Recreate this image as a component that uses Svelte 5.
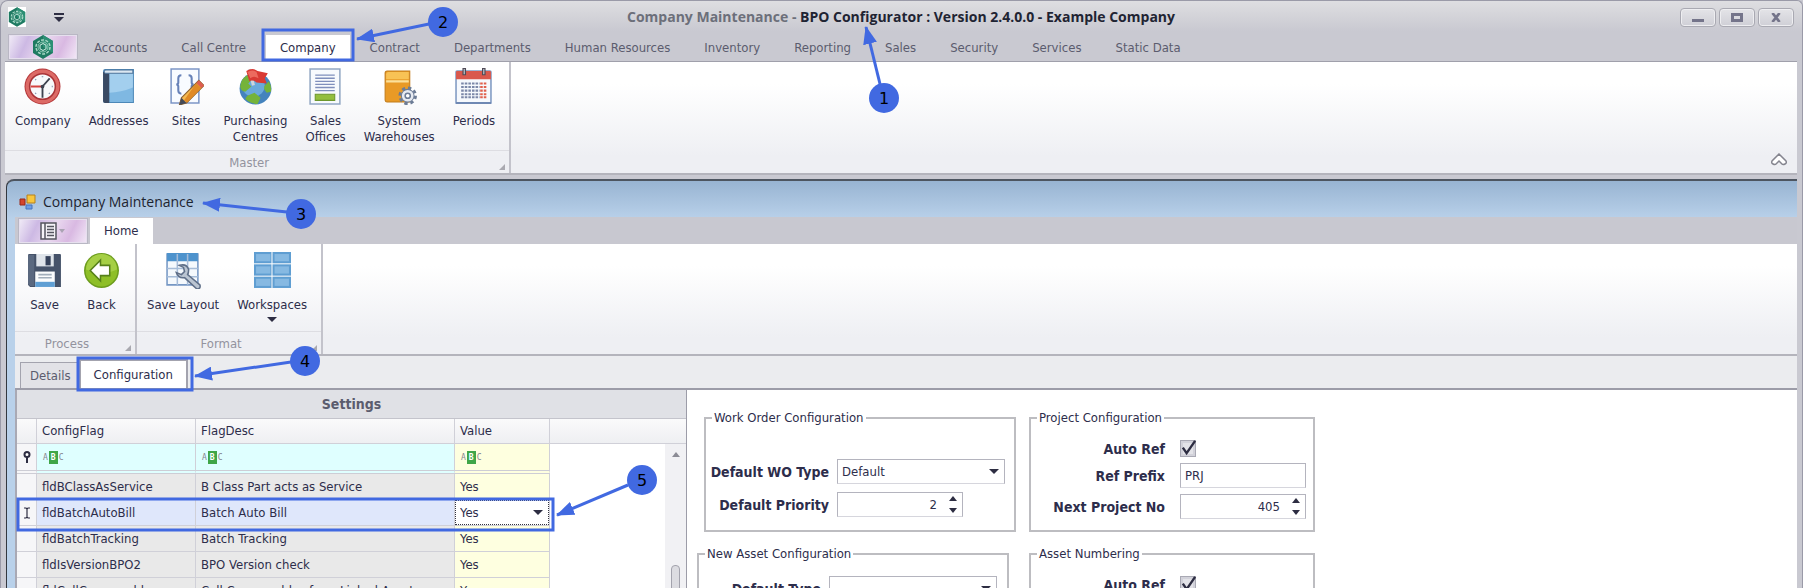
<script lang="ts">
    type Action = { label: string; icon: string; menu?: boolean };
    type Marker = { n: number; x: number; y: number; from: [number, number]; to: [number, number] };

    const tabs = [
        "Accounts",
        "Call Centre",
        "Company",
        "Contract",
        "Departments",
        "Human Resources",
        "Inventory",
        "Reporting",
        "Sales",
        "Security",
        "Services",
        "Static Data",
    ];

    const masterActions: Action[] = [
        { label: "Company", icon: "clock" },
        { label: "Addresses", icon: "book" },
        { label: "Sites", icon: "script" },
        { label: "Purchasing\nCentres", icon: "globe" },
        { label: "Sales\nOffices", icon: "page" },
        { label: "System\nWarehouses", icon: "box" },
        { label: "Periods", icon: "calendar" },
    ];

    const processActions: Action[] = [
        { label: "Save", icon: "floppy" },
        { label: "Back", icon: "back" },
    ];

    const formatActions: Action[] = [
        { label: "Save Layout", icon: "layout" },
        { label: "Workspaces", icon: "workspaces", menu: true },
    ];

    const settings = [
        { flag: "fldBClassAsService", desc: "B Class Part acts as Service", value: "Yes" },
        { flag: "fldBatchAutoBill", desc: "Batch Auto Bill", value: "Yes" },
        { flag: "fldBatchTracking", desc: "Batch Tracking", value: "Yes" },
        { flag: "fldIsVersionBPO2", desc: "BPO Version check", value: "Yes" },
        { flag: "fldCallConsumables", desc: "Call Consumables from Linked Asset", value: "Yes" },
    ];

    const markers: Marker[] = [
        { n: 1, x: 884, y: 98, from: [880, 84], to: [866, 27] },
        { n: 2, x: 443, y: 22, from: [429, 24], to: [357, 39] },
        { n: 3, x: 301, y: 214, from: [287, 212], to: [203, 203] },
        { n: 4, x: 305, y: 361, from: [291, 362], to: [195, 376] },
        { n: 5, x: 642, y: 480, from: [628, 485], to: [557, 515] },
    ];

    let activeTab = $state("Company");
    let selectedFlag = $state("fldBatchAutoBill");
    let workOrderType = $state("Default");
    let priority = $state(2);
    let projectAutoRef = $state(true);
    let refPrefix = $state("PRJ");
    let nextProject = $state(405);
    let assetAutoRef = $state(true);
</script>

{#snippet logo()}
    <svg class="logo" viewBox="1 0 22 24" aria-hidden="true">
        <path d="M12 0 22 6v12l-10 6L2 18V6z" fill="#1f7a62" />
        <path d="M12 0 22 6v12l-10-6z" fill="#2c8f74" />
        <circle cx="12" cy="12" r="7" fill="none" stroke="#a9d8c6" stroke-width="1.5" stroke-dasharray="3 1.4" />
        <circle cx="12" cy="12" r="5" fill="none" stroke="#8cc7b2" />
        <path d="M12 8.500l3 1.700v3.600l-3 1.700-3-1.700v-3.600z" fill="none" stroke="#d2eee4" />
    </svg>
{/snippet}

{#snippet icon(name: string)}
    <svg class="icon" viewBox="0 0 36 36" aria-hidden="true">
        {#if name === "clock"}
            <circle cx="18" cy="18" r="17.500" fill="#b5393b" />
            <circle cx="18" cy="18" r="16.500" fill="#dc6a66" />
            <circle cx="18" cy="18" r="12.500" fill="#f7f9fb" stroke="#a93438" stroke-width="1.5" />
            <path d="M18 18 25 10M18 18v11" stroke="#3d4350" stroke-width="1.8" fill="none" />
            <path d="M18 18H6.500" stroke="#d4423f" stroke-width="1.8" />
            <circle cx="18" cy="18" r="1.800" fill="#3d4350" />
            <path d="M18 8v1M28 18h-1M11 11l.7.7M11 25l.7-.7M25 25l-.7-.7" stroke="#7b8fa8" stroke-width="1.5" />
        {:else if name === "book"}
            <path d="M3 3q0-2 2-2h28v33H5q-2 0-2-2z" fill="#4c88b8" />
            <path d="M9 5h23v28H9z" fill="#7fb8e2" />
            <path d="M9 5h23v14Q20 24 9 24z" fill="#a3cfee" />
            <path d="M3 4h6v30H5q-2 0-2-2z" fill="#3a4a63" />
            <path d="M5 2h27v3H5q-2-1 0-3z" fill="#dce8f2" stroke="#4f749a" />
        {:else if name === "script"}
            <path d="M4 1h27v33H4z" fill="#f8fbff" stroke="#7d97c6" stroke-width="1.5" />
            <path d="M14 7q-3 0-3 3v4q0 2-2 2 2 0 2 2v4q0 3 3 3M21 7q3 0 3 3v4q0 2 2 2-2 0-2 2v4q0 3-3 3" fill="none" stroke="#6782b8" stroke-width="2" />
            <path d="M31 12l5 5-17 17-7 2 2-7z" fill="#f5b950" stroke="#8c6230" />
            <path d="M28.500 14.500l5 5-14 14-3-2z" fill="#e08a25" />
            <path d="M31 12l5 5-2.500 2.500-5-5z" fill="#dd5d50" />
            <path d="M14 29l5 5-7 2z" fill="#444a58" />
        {:else if name === "globe"}
            <circle cx="18" cy="20" r="15.500" fill="#4483bd" />
            <circle cx="16" cy="17" r="11" fill="#6aa9db" />
            <path d="M3 18q1-9 9-12l4 4-5 5 3 3-6 5q-4 0-5-5zM10 27l7-3 6 5-3 6q-7 0-12-5zM27 17l4-4q3 5 2 10l-4 1q-4-3-2-7z" fill="#74b33a" />
            <path d="M12 1l4 16" stroke="#cfd5dc" stroke-width="3" />
            <path d="M9 3q6-4 11 0l10 2-3 5 2 5-10-1q-4-3-7-1z" fill="#d93a34" />
            <path d="M10 4q5-3 9 0l2 6q-5-3-8 0z" fill="#ec6a5e" />
        {:else if name === "page"}
            <path d="M3 1h29v34H3z" fill="#f7fafd" stroke="#93a8c4" stroke-width="1.5" />
            <path d="M8 7h19M8 10h19M8 13h19M8 16h19M8 19h19M8 22h19" stroke="#7f8fbc" stroke-width="1.300" />
            <path d="M8 25.500h19v6H8z" fill="#93be3e" stroke="#6c972c" />
        {:else if name === "box"}
            <path d="M4 5q0-2 2-2h22v30H6q-2 0-2-2z" fill="#e99a26" stroke="#c27c1b" />
            <path d="M5 6q0-2 2-2h20v7H5z" fill="#f8c255" />
            <path d="M5 12h22v2H5z" fill="#fbe09a" />
            <circle cx="26" cy="27" r="7.500" fill="none" stroke="#6c7c96" stroke-width="3" stroke-dasharray="3.200 2.690" />
            <circle cx="26" cy="27" r="6.200" fill="#e6eaf1" stroke="#6c7c96" />
            <circle cx="26" cy="27" r="2.500" fill="#fff" stroke="#6c7c96" stroke-width="1.500" />
        {:else if name === "calendar"}
            <path d="M1 4q0-1 1-1h32q1 0 1 1v30H1z" fill="#f6f9fd" stroke="#7f99c2" stroke-width="1.500" />
            <path d="M1 4q0-1 1-1h32q1 0 1 1v7H1z" fill="#d9584d" />
            <path d="M9 0v7M28 0v7" stroke="#4f4a55" stroke-width="3.500" />
            <path d="M9 1v5M28 1v5" stroke="#bcc2cc" stroke-width="1.200" />
            <path d="M6 15h18M6 18.500h18M6 22h18M6 25.500h18M6 28.500h18" stroke="#7b87a8" stroke-width="2" stroke-dasharray="2.500 1" />
            <path d="M24.500 15H31M24.500 18.500H31M24.500 22H31M24.500 25.500H31M24.500 28.500H31" stroke="#e0604d" stroke-width="2" stroke-dasharray="2.500 1" />
            <path d="M1 33h34v2H1z" fill="#6f88b3" />
        {:else if name === "floppy"}
            <path d="M2 3q0-1 1-1h30q1 0 1 1v31H4l-2-2z" fill="#46536a" />
            <path d="M2 3h6v30H4l-2-2z" fill="#5a687f" />
            <path d="M10 2h17v12H10z" fill="#dfe4ea" />
            <path d="M19 4h5v9h-5z" fill="#35415a" />
            <path d="M9 19h19v15H9z" fill="#fbfcfd" />
            <path d="M9 29h19v5H9z" fill="#5f9fd4" />
            <path d="M12 22h13M12 25h13" stroke="#a2aebb" stroke-width="1.500" />
        {:else if name === "back"}
            <circle cx="18" cy="18" r="17" fill="#6c9c1d" />
            <circle cx="18" cy="18" r="15.500" fill="#8ebf27" />
            <path d="M3 17a15 15 0 0 1 30 0q-14 7-30 0z" fill="#a5cf45" />
            <path d="M7 18 17 8v5h9v10h-9v5z" fill="#fff" stroke="#56801a" stroke-width="1.500" />
        {:else if name === "layout"}
            <path d="M2 2h30v30H2z" fill="#f5f9fd" stroke="#7597c4" stroke-width="1.500" />
            <path d="M2 1h30v8H2z" fill="#4e93cd" />
            <path d="M2 16h30M2 24h30M12 2v30M22 2v30" stroke="#a6bcd8" stroke-width="1.500" />
            <path d="M14 13q7-2 9 4 0 3-1 5l12 10q1 4-3 4L19 25q-6 1-8-5l5 2 3-3-1-4z" fill="#bbc5d2" stroke="#5f6f88" stroke-width="1.500" />
        {:else if name === "workspaces"}
            {#each [0, 12, 24] as y}
                <rect x="0" {y} width="17" height="11" fill="#5f9ed2" />
                <rect x="18" {y} width="18" height="11" fill="#5f9ed2" />
                <rect x="2" y={y + 2} width="14" height="7" fill="#86b9e2" />
                <rect x="20" y={y + 2} width="14" height="7" fill="#86b9e2" />
            {/each}
        {/if}
    </svg>
{/snippet}

{#snippet group(title: string, actions: Action[])}
    <section class="group" aria-label={title}>
        <div class="actions">
            {#each actions as action}
                <button type="button" class="action">
                    {@render icon(action.icon)}
                    <span>{action.label}</span>
                    {#if action.menu}<i class="caret"></i>{/if}
                </button>
            {/each}
        </div>
        <div class="group-title">{title}<i class="launcher"></i></div>
    </section>
{/snippet}

{#snippet tick()}
    <svg viewBox="0 0 18 18" aria-hidden="true">
        <path d="M3 8l4 6L16 1" fill="none" stroke="#2d2d42" stroke-width="2.500" />
    </svg>
{/snippet}

{#snippet spinner()}
    <span class="spinner">
        <button type="button" aria-label="Increase"><i class="caret up"></i></button>
        <button type="button" aria-label="Decrease"><i class="caret"></i></button>
    </span>
{/snippet}

{#snippet abc()}
    <span class="abc">A<b>B</b>C</span>
{/snippet}

<div class="shell">
    <header class="title-bar">
        <div class="quick-access">
            {@render logo()}
            <button type="button" class="quick-menu" aria-label="Customise toolbar"><i class="caret"></i></button>
        </div>
        <h1><span>Company Maintenance -</span> BPO Configurator : Version 2.4.0.0 - Example Company</h1>
        <div class="window-buttons">
            <button type="button" aria-label="Minimise"><i class="min"></i></button>
            <button type="button" aria-label="Maximise"><i class="max"></i></button>
            <button type="button" aria-label="Close">
                <svg viewBox="0 0 12 10" aria-hidden="true"><path d="M2 0l8 10M10 0 2 10" stroke="#74748a" stroke-width="3" /></svg>
            </button>
        </div>
    </header>

    <nav class="tabs">
        <button type="button" class="app-button" aria-label="Application menu">{@render logo()}</button>
        {#each tabs as tab}
            <button type="button" class="tab" class:active={tab === activeTab} onclick={() => (activeTab = tab)}>
                <span>{tab}</span>
            </button>
        {/each}
    </nav>

    <div class="ribbon">
        {@render group("Master", masterActions)}
        <button type="button" class="collapse" aria-label="Collapse ribbon">
            <svg viewBox="0 0 16 14" aria-hidden="true">
                <path d="M8 1l7 7q1 2-1 3-2 1-3 0L8 8l-3 3q-1 1-3 0-2-1-1-3z" fill="#fff" stroke="#85858f" stroke-width="1.500" />
            </svg>
        </button>
    </div>

    <div class="child-window">
        <div class="child-title">
            <svg viewBox="0 0 17 16" aria-hidden="true">
                <path d="M8 1h8v8H8z" fill="#f8c63c" stroke="#b5801d" />
                <path d="M1 5h5v6H1z" fill="#d4452d" stroke="#98281b" />
                <path d="M7 11h6v4H7z" fill="#6c9de6" stroke="#4674bd" />
            </svg>
            <h2>Company Maintenance</h2>
        </div>

        <nav class="tabs child-tabs">
            <button type="button" class="app-button" aria-label="File menu">
                <svg class="file" viewBox="0 0 26 18" aria-hidden="true">
                    <path d="M1 1h15v16H1zM5 1v16" fill="#f5f2f7" stroke="#55555f" stroke-width="1.500" />
                    <path d="M7 4.500h7M7 7.500h7M7 10.500h7M7 13.500h7" stroke="#55555f" stroke-width="1.500" />
                    <path d="M19 7h6l-3 4z" fill="#aaa3b3" />
                </svg>
            </button>
            <button type="button" class="tab active"><span>Home</span></button>
        </nav>

        <div class="ribbon child-ribbon">
            {@render group("Process", processActions)}
            {@render group("Format", formatActions)}
        </div>

        <nav class="pages">
            <button type="button" class="page">Details</button>
            <button type="button" class="page active">Configuration</button>
        </nav>

        <main>
            <section class="settings">
                <h3>Settings</h3>
                <div class="grid">
                    <table>
                        <colgroup>
                            <col class="col-mark" /><col class="col-flag" /><col class="col-desc" /><col class="col-value" /><col />
                        </colgroup>
                        <thead>
                            <tr>
                                <th></th>
                                <th>ConfigFlag</th>
                                <th>FlagDesc</th>
                                <th>Value</th>
                                <th></th>
                            </tr>
                        </thead>
                        <tbody>
                            <tr class="filter">
                                <td class="mark">
                                    <svg viewBox="0 0 8 12" aria-label="Filter">
                                        <circle cx="4" cy="3.500" r="2.500" fill="#fff" stroke="#2d2d42" stroke-width="2" />
                                        <path d="M4 6v6" stroke="#2d2d42" stroke-width="2" />
                                    </svg>
                                </td>
                                <td>{@render abc()}</td>
                                <td>{@render abc()}</td>
                                <td class="value">{@render abc()}</td>
                                <td class="blank"></td>
                            </tr>
                            {#each settings as row}
                                <tr class:selected={row.flag === selectedFlag} onclick={() => (selectedFlag = row.flag)}>
                                    <td class="mark">
                                        {#if row.flag === selectedFlag}
                                            <svg viewBox="0 0 8 12" aria-label="Editing">
                                                <path d="M1 1h2l1 1 1-1h2M4 2v8M1 11h2l1-1 1 1h2" fill="none" stroke="#2d2d42" stroke-width="1.200" />
                                            </svg>
                                        {/if}
                                    </td>
                                    <td>{row.flag}</td>
                                    <td>{row.desc}</td>
                                    <td class="value">
                                        {#if row.flag === selectedFlag}
                                            <span class="drop">
                                                <select aria-label={row.flag} bind:value={row.value}>
                                                    <option>Yes</option>
                                                    <option>No</option>
                                                </select>
                                                <i class="caret"></i>
                                            </span>
                                        {:else}
                                            {row.value}
                                        {/if}
                                    </td>
                                    <td class="blank"></td>
                                </tr>
                            {/each}
                        </tbody>
                    </table>
                    <div class="scroll">
                        <div class="scroll-head"></div>
                        <button type="button" aria-label="Scroll up"><i class="caret up"></i></button>
                        <div class="thumb"></div>
                    </div>
                </div>
            </section>

            <form class="config">
                <div class="column">
                    <fieldset class="work-order">
                        <legend>Work Order Configuration</legend>
                        <label for="wo-type">Default WO Type</label>
                        <span class="drop">
                            <select id="wo-type" bind:value={workOrderType}>
                                <option>Default</option>
                            </select>
                            <i class="caret"></i>
                        </span>
                        <label for="priority">Default Priority</label>
                        <span class="number">
                            <input id="priority" type="number" bind:value={priority} />
                            {@render spinner()}
                        </span>
                    </fieldset>
                    <fieldset class="new-asset">
                        <legend>New Asset Configuration</legend>
                        <label for="asset-type">Default Type</label>
                        <span class="drop">
                            <select id="asset-type"><option></option></select>
                            <i class="caret"></i>
                        </span>
                    </fieldset>
                </div>
                <div class="column">
                    <fieldset class="project">
                        <legend>Project Configuration</legend>
                        <label for="project-auto">Auto Ref</label>
                        <span class="check">
                            <input id="project-auto" type="checkbox" bind:checked={projectAutoRef} />
                            {#if projectAutoRef}{@render tick()}{/if}
                        </span>
                        <label for="prefix">Ref Prefix</label>
                        <input id="prefix" type="text" bind:value={refPrefix} />
                        <label for="next-project">Next Project No</label>
                        <span class="number">
                            <input id="next-project" type="number" bind:value={nextProject} />
                            {@render spinner()}
                        </span>
                    </fieldset>
                    <fieldset class="project">
                        <legend>Asset Numbering</legend>
                        <label for="asset-auto">Auto Ref</label>
                        <span class="check">
                            <input id="asset-auto" type="checkbox" bind:checked={assetAutoRef} />
                            {#if assetAutoRef}{@render tick()}{/if}
                        </span>
                    </fieldset>
                </div>
            </form>
        </main>
    </div>

    <!-- callouts drawn over the windows -->
    <svg class="callouts">
        <defs>
            <marker id="head" markerWidth="20" markerHeight="14" refX="17" refY="7" orient="auto" markerUnits="userSpaceOnUse">
                <path d="M0 0 18 7 0 14z" fill="#4169e1" />
            </marker>
        </defs>
        <g fill="none" stroke="#4169e1" stroke-width="3">
            <rect x="263" y="30" width="90" height="30" />
            <rect x="78" y="358" width="114" height="32" />
            <rect x="18" y="499" width="535" height="31" />
            {#each markers as m}
                <line x1={m.from[0]} y1={m.from[1]} x2={m.to[0]} y2={m.to[1]} marker-end="url(#head)" />
            {/each}
        </g>
        {#each markers as m}
            <circle cx={m.x} cy={m.y} r="15" fill="#4169e1" />
            <text x={m.x} y={m.y + 6} text-anchor="middle">{m.n}</text>
        {/each}
    </svg>
</div>

<style>
    :global(body) {
        background: #c9c9d1;
    }

    .shell {
        position: relative;
        box-sizing: border-box;
        display: flex;
        flex-direction: column;
        height: 100vh;
        overflow: hidden;

        padding: 0 5px 0 4px;
        border: 1px solid #9a9aa8;
        border-bottom: 0;
        border-radius: 8px 6px 0 0;
        background: linear-gradient(#dedee1, #c9c9d1 30px);

        font: 13px/16px "DejaVu Sans Condensed", "DejaVu Sans", sans-serif;
        color: #2d2d4b;
    }

    button,
    input,
    select {
        box-sizing: border-box;
        margin: 0;
        padding: 0;
        border: 0;
        background: none;
        font: inherit;
        color: inherit;
    }

    h1,
    h2,
    h3 {
        margin: 0;
    }

    svg {
        display: block;
    }

    .caret {
        display: block;
        border: 5px solid transparent;
        border-top-color: #2d2d42;
        border-bottom: 0;
    }

    .caret.up {
        border-top: 0;
        border-bottom: 5px solid #2d2d42;
    }

    .title-bar {
        display: grid;
        grid-template-columns: 1fr auto 1fr;
        align-items: center;
        height: 32px;
        flex: none;
    }

    .title-bar h1 {
        font: 700 14px/18px "Open Sans", "Noto Sans", sans-serif;
        color: #1f2433;
    }

    .title-bar h1 span {
        color: #6c6f7a;
    }

    .quick-access {
        display: flex;
        align-items: center;
        gap: 28px;
        padding-left: 3px;
    }

    .quick-access .logo {
        width: 18px;
        height: 20px;
        background: #fff;
    }

    .quick-menu {
        padding-top: 2px;
        border-top: 2px solid #2d2d42;
    }

    .window-buttons {
        display: flex;
        justify-content: flex-end;
        gap: 3px;
        padding-right: 3px;
    }

    .window-buttons button {
        display: flex;
        align-items: center;
        justify-content: center;
        width: 36px;
        height: 19px;
        border: 1px solid #a9a9b2;
        border-radius: 4px;
        background: linear-gradient(#e4e4e8, #cfcfd6);
        box-shadow: inset 0 0 0 1px #eeeef1;
    }

    .window-buttons svg {
        width: 12px;
        height: 9px;
    }

    .min {
        width: 12px;
        height: 3px;
        margin-top: 6px;
        background: #74748a;
    }

    .max {
        width: 6px;
        height: 3px;
        border: 3px solid #74748a;
    }

    .tabs {
        display: flex;
        align-items: stretch;
        flex: none;
        height: 28px;
        border-bottom: 1px solid #a0a0ab;
    }

    .app-button {
        display: flex;
        align-items: center;
        justify-content: center;
        align-self: center;
        width: 68px;
        height: 24px;
        margin-left: 4px;
        border: 1px solid #e6e0ee;
        background: linear-gradient(115deg, #efe9f6, #cdb9e4 25%, #e9d8ef 50%, #d9b9e2 75%, #f1e6f6);
        box-shadow: 0 0 0 1px #b9b7c4;
    }

    .app-button .logo {
        width: 24px;
        height: 24px;
    }

    .app-button .file {
        width: 26px;
        height: 18px;
    }

    .tab {
        padding: 2px 3px 0;
        color: #5b5c6e;
    }

    .tab span {
        display: flex;
        align-items: center;
        height: 100%;
        padding: 0 14px;
    }

    .tab.active {
        color: #2d2d4b;
    }

    .tab.active span {
        background: #fff;
    }

    .ribbon {
        display: flex;
        flex: none;
        height: 111px;
        border-bottom: 2px solid #b4b4bc;
        background: linear-gradient(#fff 20%, #eeeff3 85%);
    }

    .group {
        display: flex;
        flex-direction: column;
        border-right: 2px solid #c3c3cb;
    }

    .actions {
        display: flex;
        flex: 1;
        align-items: flex-start;
        padding: 6px 5px 0 1px;
    }

    .action {
        display: flex;
        flex-direction: column;
        align-items: center;
        gap: 8px;
        min-width: 57px;
        padding: 0 9px;
    }

    .action span {
        white-space: pre-line;
    }

    .action .caret {
        margin-top: -4px;
    }

    .icon {
        width: 37px;
        height: 37px;
    }

    .group-title {
        position: relative;
        height: 22px;
        padding-right: 16px;
        border-top: 1px solid #dddde2;
        line-height: 24px;
        text-align: center;
        color: #93939e;
    }

    .launcher {
        position: absolute;
        right: 4px;
        bottom: 3px;
        border: 3px solid #a9a9b0;
        border-top-color: transparent;
        border-left-color: transparent;
    }

    .collapse {
        align-self: flex-end;
        margin: 0 10px 6px auto;
    }

    .collapse svg {
        width: 16px;
        height: 14px;
    }

    .child-window {
        display: flex;
        flex: 1;
        flex-direction: column;
        min-height: 0;
        margin: 4px 0 0 1px;
        padding-left: 8px;
        border-top: 2px solid #4d5560;
        border-left: 1px solid #33383f;
        border-radius: 8px 0 0;
        background: linear-gradient(#98b4d2, #b9d1ea 38px);
    }

    .child-title {
        display: flex;
        align-items: center;
        gap: 7px;
        flex: none;
        height: 36px;
        padding: 6px 0 0 4px;
        box-sizing: border-box;
    }

    .child-title svg {
        width: 17px;
        height: 16px;
    }

    .child-title h2 {
        font: 14px/20px "Open Sans", "Noto Sans", sans-serif;
        color: #1d2430;
    }

    .child-tabs {
        height: 27px;
        border-bottom: 0;
        background: #c8c8d0;
    }

    .child-tabs .tab {
        padding-top: 1px;
    }

    .child-ribbon {
        height: 110px;
    }

    .child-ribbon .actions {
        padding-top: 8px;
    }

    .pages {
        display: flex;
        align-items: flex-end;
        flex: none;
        height: 32px;
        padding-left: 5px;
        border-bottom: 2px solid #9c9ca8;
        background: #ebecef;
    }

    .page {
        height: 26px;
        padding: 0 7px 0 9px;
        border: 1px solid #a3a3ae;
        border-bottom: 0;
        background: #e2e2e7;
        color: #5b5c6e;
    }

    .page.active {
        height: 29px;
        padding: 0 13px;
        border-width: 2px 2px 0;
        background: #fff;
        color: #2d2d4b;
    }

    main {
        display: flex;
        flex: 1;
        min-height: 0;
        background: #fff;
    }

    .settings {
        width: 669px;
        flex: none;
        border-left: 2px solid #a9a9b4;
        border-right: 1px solid #9c9ca8;
    }

    .settings h3 {
        height: 28px;
        background: #e0e1e6;
        border-bottom: 1px solid #c4c4cc;
        font-size: 14px;
        line-height: 28px;
        text-align: center;
        color: #5b5c6e;
    }

    .grid {
        display: flex;
    }

    table {
        flex: 1;
        align-self: flex-start;
        border-collapse: separate;
        border-spacing: 0;
        table-layout: fixed;
    }

    .col-mark {
        width: 20px;
    }

    .col-flag {
        width: 159px;
    }

    .col-desc {
        width: 259px;
    }

    .col-value {
        width: 95px;
    }

    th,
    td {
        box-sizing: border-box;
        height: 26px;
        padding: 0 0 0 5px;
        border-right: 1px solid #d0d0d8;
        border-bottom: 1px solid #d0d0d8;
        font-weight: normal;
        text-align: left;
        white-space: nowrap;
    }

    th {
        height: 25px;
        background: linear-gradient(#fafafb, #eeeff2);
    }

    th:last-child {
        border-right: 0;
    }

    td {
        background: #e9e9e9;
    }

    td.value {
        background: #feffe0;
    }

    .filter td {
        height: 30px;
        border-bottom: 4px double #cdcdd5;
        background: #dfffff;
    }

    .filter td.value {
        background: #feffdf;
    }

    .selected td {
        background: #dfe7fb;
    }

    .selected td.value {
        padding: 0;
        background: #fff;
    }

    tr td.mark {
        padding: 0 0 0 6px;
        background: #f6f6f8;
    }

    td.mark svg {
        width: 8px;
        height: 12px;
    }

    tr td.blank {
        border: 0;
        background: #fff;
    }

    .abc {
        display: flex;
        align-items: center;
        gap: 1px;
        padding-left: 1px;
        font: 8px/13px "DejaVu Sans Mono", monospace;
        color: #85858f;
    }

    .abc b {
        padding: 0 2px;
        background: #3fa648;
        color: #fff;
    }

    .drop,
    .number {
        position: relative;
        display: block;
    }

    .drop select {
        display: block;
        width: 100%;
        height: 25px;
        padding: 0 20px 0 4px;
        border: 1px solid #b4b4be;
        border-bottom-color: #d6d6dd;
        background: #fff;
        appearance: none;
    }

    .selected select {
        border: 1px dotted #33333f;
    }

    .drop .caret {
        position: absolute;
        top: 10px;
        right: 6px;
        pointer-events: none;
    }

    .scroll {
        display: flex;
        flex-direction: column;
        align-items: center;
        width: 21px;
        background: #f1f1f4;
    }

    .scroll-head {
        box-sizing: border-box;
        width: 100%;
        height: 25px;
        border-bottom: 1px solid #d0d0d8;
        background: linear-gradient(#fafafb, #eeeff2);
    }

    .scroll button {
        margin: 8px 0 108px;
    }

    .scroll .caret.up {
        border-width: 0 4px 5px;
        border-bottom-color: #8b8b95;
    }

    .thumb {
        box-sizing: border-box;
        width: 9px;
        height: 80px;
        border: 1px solid #a3a3ad;
        border-radius: 4px;
        background: #dcdce1;
    }

    .config {
        display: flex;
        gap: 13px;
        padding: 19px 10px 0;
    }

    .column {
        display: flex;
        flex-direction: column;
        gap: 13px;
    }

    fieldset {
        box-sizing: border-box;
        display: grid;
        flex: none;
        align-content: start;
        align-items: center;
        column-gap: 8px;
        height: 123px;
        margin: 0;
        padding: 0;
        border: 2px solid #bdbdc1;
    }

    legend {
        margin-left: 6px;
        padding: 0 2px;
        line-height: 18px;
    }

    label {
        font-size: 14px;
        font-weight: bold;
        text-align: right;
    }

    .work-order {
        grid-template-columns: 123px 168px;
        row-gap: 8px;
        width: 312px;
        margin-left: 7px;
    }

    .work-order legend {
        margin-bottom: 32px;
    }

    .number {
        width: 126px;
    }

    .new-asset {
        grid-template-columns: 122px 168px;
        width: 312px;
    }

    .new-asset legend,
    .project legend {
        margin-bottom: 13px;
    }

    .project {
        grid-template-columns: 134px 126px;
        column-gap: 15px;
        row-gap: 6px;
        width: 286px;
    }

    input[type="text"],
    input[type="number"] {
        display: block;
        width: 126px;
        height: 25px;
        padding: 0 4px;
        border: 1px solid #b4b4be;
        border-bottom-color: #d6d6dd;
        background: #fff;
    }

    input[type="number"] {
        padding-right: 25px;
        text-align: right;
        appearance: textfield;
    }

    input[type="number"]::-webkit-inner-spin-button {
        margin: 0;
        appearance: none;
    }

    .spinner {
        position: absolute;
        top: 4px;
        right: 6px;
        display: grid;
        gap: 7px;
    }

    .spinner .caret {
        border-left-width: 4px;
        border-right-width: 4px;
    }

    .check {
        position: relative;
        width: 17px;
        height: 17px;
    }

    .check input {
        display: block;
        width: 16px;
        height: 17px;
        border: 1px solid #a9a9b4;
        background: #e3e3e8;
        box-shadow: inset 0 0 0 2px #d2d2da;
        appearance: none;
    }

    .check svg {
        position: absolute;
        inset: 0;
        pointer-events: none;
    }

    .callouts {
        position: absolute;
        top: -1px;
        left: -1px;
        width: 100%;
        height: 100%;
        pointer-events: none;
    }

    .callouts text {
        font: 16px "DejaVu Sans", sans-serif;
        fill: #000;
    }
</style>
